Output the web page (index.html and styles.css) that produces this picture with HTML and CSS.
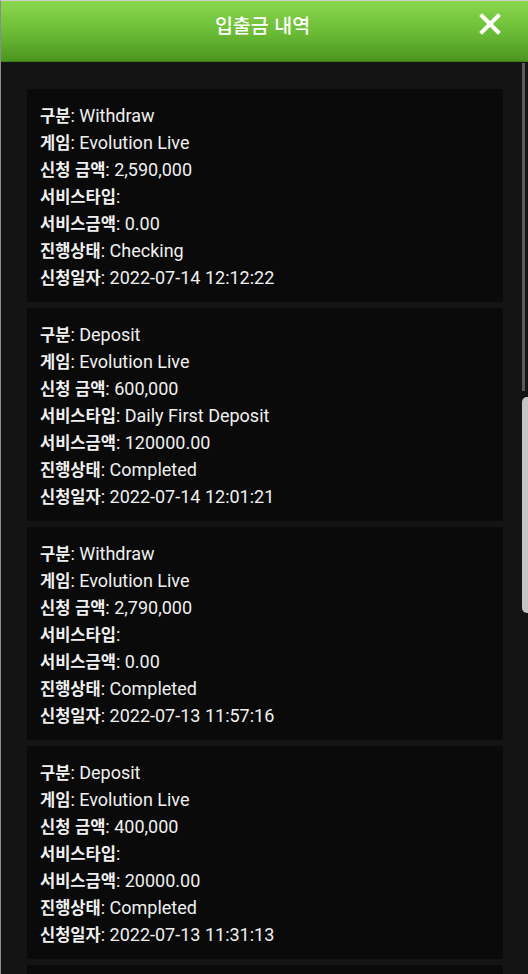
FILE: index.html
```html
<!DOCTYPE html>
<html lang="ko">
<head>
  <meta charset="UTF-8" />
  <meta name="viewport" content="width=device-width, initial-scale=1.0" />
  <title>입출금 내역</title>
  <link rel="stylesheet" href="styles.css">
</head>
<body>
  <div class="modal">
    <header class="modal-head">
      <h1>입출금 내역</h1>
      <button class="close" aria-label="닫기">
        <svg width="22" height="22" viewBox="0 0 22 22"><path d="M3 3 L19 19 M19 3 L3 19" stroke="#fff" stroke-width="4" stroke-linecap="square" fill="none"/></svg>
      </button>
    </header>

    <div class="history">
      <div class="row">
        <p><b>구분</b>: Withdraw</p>
        <p><b>게임</b>: Evolution Live</p>
        <p><b>신청 금액</b>: 2,590,000</p>
        <p><b>서비스타입</b>:</p>
        <p><b>서비스금액</b>: 0.00</p>
        <p><b>진행상태</b>: Checking</p>
        <p><b>신청일자</b>: 2022-07-14 12:12:22</p>
      </div>
      <div class="row">
        <p><b>구분</b>: Deposit</p>
        <p><b>게임</b>: Evolution Live</p>
        <p><b>신청 금액</b>: 600,000</p>
        <p><b>서비스타입</b>: Daily First Deposit</p>
        <p><b>서비스금액</b>: 120000.00</p>
        <p><b>진행상태</b>: Completed</p>
        <p><b>신청일자</b>: 2022-07-14 12:01:21</p>
      </div>
      <div class="row">
        <p><b>구분</b>: Withdraw</p>
        <p><b>게임</b>: Evolution Live</p>
        <p><b>신청 금액</b>: 2,790,000</p>
        <p><b>서비스타입</b>:</p>
        <p><b>서비스금액</b>: 0.00</p>
        <p><b>진행상태</b>: Completed</p>
        <p><b>신청일자</b>: 2022-07-13 11:57:16</p>
      </div>
      <div class="row">
        <p><b>구분</b>: Deposit</p>
        <p><b>게임</b>: Evolution Live</p>
        <p><b>신청 금액</b>: 400,000</p>
        <p><b>서비스타입</b>:</p>
        <p><b>서비스금액</b>: 20000.00</p>
        <p><b>진행상태</b>: Completed</p>
        <p><b>신청일자</b>: 2022-07-13 11:31:13</p>
      </div>
      <!-- next record, scrolled below the fold -->
      <div class="row"></div>
    </div>

    <div class="track"></div>
    <div class="thumb"></div>
  </div>
</body>
</html>
```

FILE: styles.css
```css
html, body { margin: 0; padding: 0; background: #141414; }
body { font-family: Roboto, "Noto Sans CJK KR", sans-serif; color: #f0f0f0; }

.modal { position: relative; height: 974px; overflow: hidden; border-left: 1px solid #8c8c8c; border-top: 1px solid #cfcfcf; box-sizing: border-box; background: #141414; }

.modal-head { position: relative; height: 61px; border-bottom: 1px solid #3f7c19; background: linear-gradient(#8ad84c, #6cbd37 50%, #4b961e); text-align: center; padding-right: 4px; box-sizing: border-box; }
.modal-head h1 { margin: 0; padding-top: 12px; font-size: 19.5px; line-height: 24px; font-weight: 500; color: #fff; font-family: "Noto Sans CJK KR", sans-serif; }
.close { position: absolute; top: 12px; right: 27px; padding: 0; border: none; background: none; line-height: 0; }

.history { display: flex; flex-direction: column; gap: 6px; padding: 27px 25px 0 26px; }
.row { background: #0a0a0a; padding: 13px 13px 11px; min-height: 189px; }
.row p { margin: 0; height: 27px; font-size: 18px; line-height: 27px; white-space: nowrap; }
.row b { font-family: "Noto Sans CJK KR", sans-serif; font-weight: 700; font-size: 16.5px; line-height: 1; }

.track { position: absolute; top: 62px; left: 521px; width: 3px; height: 328px; background: #5a5a5a; }
.thumb { position: absolute; top: 396px; left: 521px; width: 8px; height: 216px; background: #c4c4c4; border-radius: 5px 0 0 5px; }
```
